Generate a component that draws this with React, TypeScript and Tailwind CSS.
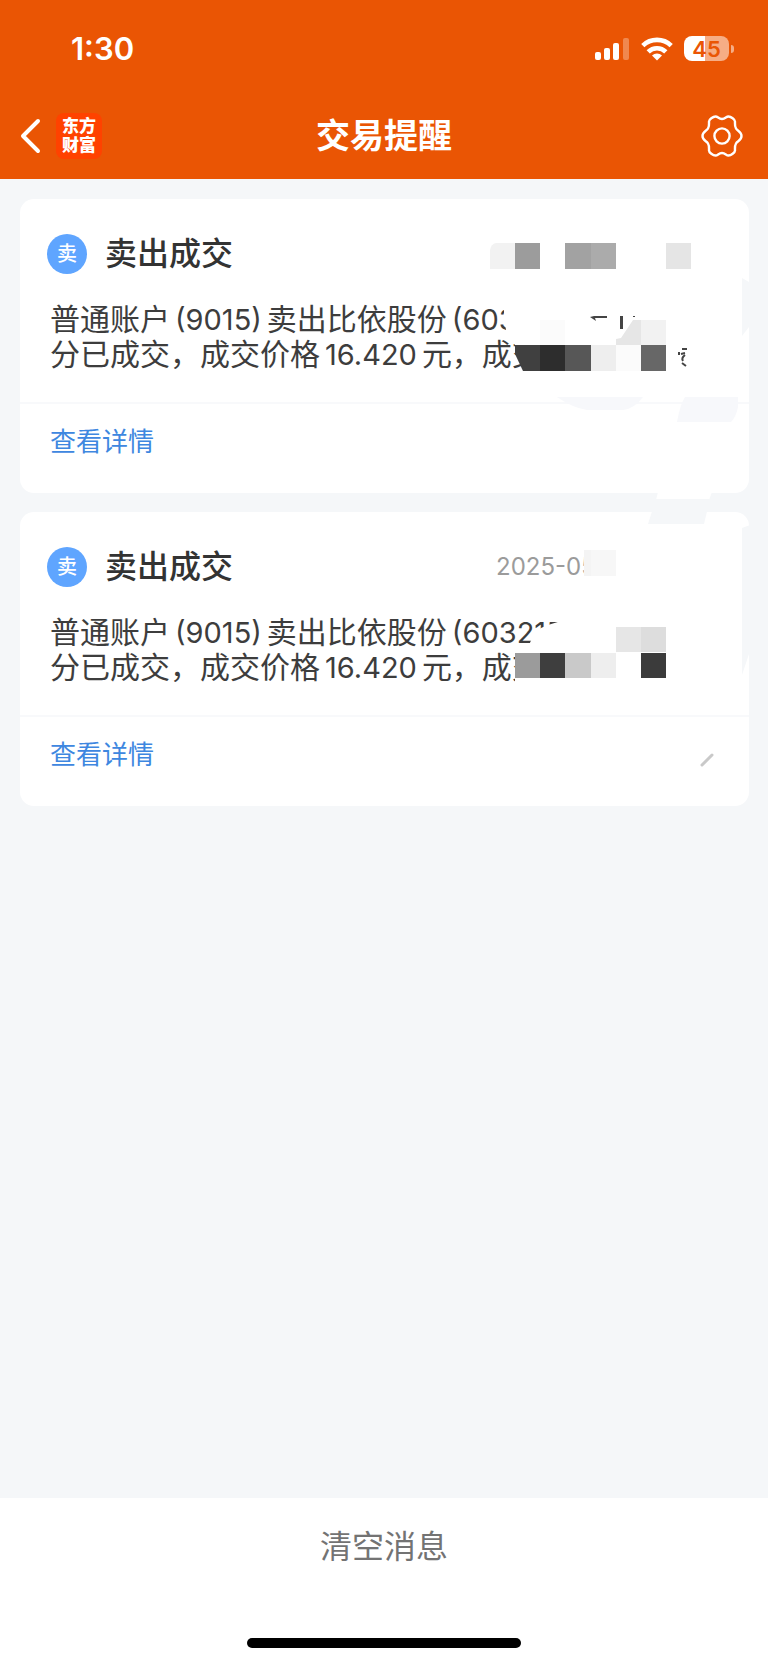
import React from "react";

interface TradeMessage {
  id: number;
  title: string;
  date: string;
  code: string;
}

const messages: TradeMessage[] = [
  { id: 1, title: "卖出成交", date: "", code: "(603" },
  { id: 2, title: "卖出成交", date: "2025-05", code: "(603215" },
];

const StatusBar = () => (
  <div className="flex h-[97px] items-center justify-between pl-[71px] pr-[34px]">
    <span className="text-[31px] font-semibold leading-8">1:30</span>
    <div className="flex items-center gap-[11px]">
      <svg width="35" height="24" viewBox="0 0 35 24" fill="#fff" aria-hidden="true">
        <rect x="0" y="15" width="6" height="8" rx="2" />
        <rect x="9" y="11" width="6" height="12" rx="2" />
        <rect x="18" y="6" width="6" height="17" rx="2" />
        <rect x="28" y="1" width="6" height="22" rx="2" opacity="0.3" />
      </svg>
      <svg width="32" height="24" viewBox="0 0 32 24" fill="none" stroke="#fff" strokeWidth="4.6" aria-hidden="true">
        <path d="M1.8 8.6a20.4 20.4 0 0 1 28.4 0" />
        <path d="M7.2 14.8a12.6 12.6 0 0 1 17.6 0" />
        <path d="M16 23.6l-5-5.2a7.4 7.4 0 0 1 10 0z" fill="#fff" stroke="none" />
      </svg>
      <div className="flex items-center gap-0.5">
        <span className="flex h-[25px] w-[45px] items-center justify-center rounded-lg bg-[linear-gradient(90deg,#fff_47%,#f6ad85_47%)] text-[22px] font-semibold leading-6 text-[#ea5504]">
          45
        </span>
        <span className="h-2 w-[3px] rounded-r-full bg-[#f6ad85]" />
      </div>
    </div>
  </div>
);

const Header = () => (
  <header className="h-[179px] bg-[#ea5504] text-white">
    <StatusBar />
    <div className="grid h-[78px] grid-cols-[1fr_auto_1fr] items-center px-5">
      <div className="flex items-center gap-[15px]">
        <button type="button" aria-label="返回">
          <svg width="21" height="36" viewBox="0 0 21 36" fill="none" stroke="#fff" strokeWidth="4" strokeLinecap="round" strokeLinejoin="round">
            <path d="M18 3L3 18l15 15" />
          </svg>
        </button>
        <span className="flex h-[46px] w-[46px] flex-col items-center justify-center rounded-lg bg-[#ff4200] text-[17px] font-black leading-[19px]">
          <span>东方</span>
          <span>财富</span>
        </span>
      </div>
      <h1 className="text-[34px] font-bold leading-10">交易提醒</h1>
      <button type="button" aria-label="设置" className="mr-[5px] justify-self-end">
        <svg width="42" height="42" viewBox="0 0 42 42" fill="none" stroke="#fff" strokeWidth="2.4" strokeLinejoin="round">
          <path d="M14.5 1.5C17 1.5 17.500 4 21 4S25 1.500 27.500 1.500C30 1.500 34 4.500 34 6.500C34 9 33.500 11 35 13.500S40.500 16.500 40.500 21S36.500 26 35 28.500S34 33 34 35.500C34 37.500 30 40.500 27.500 40.500C25 40.500 24.500 38 21 38S17 40.500 14.500 40.500C12 40.500 8 37.500 8 35.500C8 33 8.500 31 7 28.500S1.500 25.500 1.500 21S5.500 16 7 13.500S8 9 8 6.500C8 4.500 12 1.500 14.500 1.500Z" />
          <circle cx="21" cy="21" r="7.6" />
        </svg>
      </button>
    </div>
  </header>
);

// Mosaic hiding the private part of the first message
const FirstMosaic = () => (
  <svg className="pointer-events-none absolute left-0 top-0" width="729" height="294" viewBox="0 0 729 294" aria-hidden="true">
    <path d="M484 90h201v56H495l-8-10-3-16z" fill="#fff" />
    <path d="M476 44h19v26h-25V51q1-6 6-7z" fill="#f2f2f2" />
    <path d="M495 44h25v26h-25z" fill="#9c9c9c" />
    <path d="M545 44h26v26h-26z" fill="#a2a2a2" />
    <path d="M571 44h25v26h-25z" fill="#ababab" />
    <path d="M646 44h25v26h-25z" fill="#e5e5e5" />
    <path d="M520 121h25v25h-25z" fill="#fbfbfb" />
    <path d="M613 121h8v25h-25v-6l5-1z" fill="#e6e6e6" />
    <path d="M621 121h25v25h-25z" fill="#f2f2f2" />
    <path d="M495 146h25v26h-17l-8-17z" fill="#404040" />
    <path d="M520 146h25v26h-25z" fill="#2d2d2d" />
    <path d="M545 146h26v26h-26z" fill="#575757" />
    <path d="M571 146h25v26h-25z" fill="#eee" />
    <path d="M596 146h25v26h-25z" fill="#fbfbfb" />
    <path d="M621 146h25v26h-25z" fill="#676767" />
    <path d="M570 118l4-1h13v2h-12l1 3zM600 117h3v13h-3zM613 117h2v1h-2z" fill="#444" />
    <path d="M662 150h5M659 153v3M661 155l4-1M665 156q-4 3-2 6M662 164l4 3" stroke="#444" strokeWidth="2" fill="none" />
    <path d="M537 198h86q-9 12-20 13h-36q-14-2-30-13z" fill="#f7f8fb" />
    <path d="M665 198h53v10q-2 10-7 15h-54q3-17 8-25z" fill="#f7f8fb" />
    <path d="M722 79l7 4v45l-7 9z" fill="#f5f7f9" />
  </svg>
);

// Mosaic of the second message, it also smears across the gap above the card
const SecondMosaic = () => (
  <svg className="pointer-events-none absolute left-0 top-0 overflow-visible" width="729" height="294" viewBox="0 0 729 294" aria-hidden="true">
    <path d="M638-20h54l-3 8h-53z" fill="#fff" />
    <path d="M636-13h54l-6 25h-56z" fill="#f5f7f9" />
    <path d="M564 20h90v60h-90z" fill="#fff" />
    <path d="M590 100v41h-86l5-8 4-9 8-8 7-3 13-4z" fill="#fff" />
    <path d="M495 166h40v8h-40z" fill="#fff" />
    <path d="M564 38h7v26h-7z" fill="#f4f4f4" />
    <path d="M571 38h25v26h-25z" fill="#f7f7f7" />
    <path d="M596 115h25v25h-25z" fill="#e6e6e6" />
    <path d="M621 115h25v25h-25z" fill="#ddd" />
    <path d="M495 141h25v25h-25z" fill="#9b9b9b" />
    <path d="M520 141h25v25h-25z" fill="#3e3e3e" />
    <path d="M545 141h26v25h-26z" fill="#c9c9c9" />
    <path d="M571 141h25v25h-25z" fill="#eee" />
    <path d="M621 141h25v25h-25z" fill="#3b3b3b" />
    <path d="M722 16l8-3v126l-8 24z" fill="#f5f7f9" />
    <path d="M682 253l10-10" stroke="#c9c9c9" strokeWidth="3" strokeLinecap="round" />
  </svg>
);

const Num = ({ children }: { children: React.ReactNode }) => (
  <span className="ml-[5px] mr-[5px] text-[29px]">{children}</span>
);

const MessageCard = ({ message, children }: { message: TradeMessage; children?: React.ReactNode }) => (
  <article className="relative rounded-[14px] bg-white">
    <div className="flex h-[110px] items-center pl-[27px]">
      <span className="flex h-10 w-10 items-center justify-center rounded-full bg-[#5fa5ff] text-[20px] font-medium leading-6 text-white">
        卖
      </span>
      <h2 className="ml-[18px] w-[391px] text-[32px] font-medium leading-10 text-[#333]">{message.title}</h2>
      <time className="text-[24px] leading-8 text-[#9b9b9b]">{message.date}</time>
    </div>
    <div className="-mt-[7px] h-[100px] whitespace-nowrap pl-[30px] text-[30px] leading-[35px] text-[#3d3d3d]">
      <p>
        普通账户<Num>(9015)</Num>卖出比依股份<Num>{message.code}</Num>
      </p>
      <p>
        分已成交，成交价格<Num>16.420</Num>元，成交
      </p>
    </div>
    <div className="flex h-[91px] items-start border-t-2 border-[#f8f9fb] pl-[30px] pt-[22px]">
      <a href="#detail" className="text-[26px] leading-8 text-[#3e87e0]">
        查看详情
      </a>
    </div>
    {children}
  </article>
);

const App = () => (
  <div className="flex min-h-screen flex-col bg-[#f5f7f9] font-['Inter','Noto_Sans_CJK_SC',sans-serif]">
    <Header />
    <main className="flex flex-1 flex-col gap-[19px] px-5 pt-5 pr-[19px]">
      <MessageCard message={messages[0]}>
        <FirstMosaic />
      </MessageCard>
      <MessageCard message={messages[1]}>
        <SecondMosaic />
      </MessageCard>
    </main>
    <footer className="flex h-[166px] flex-col items-center justify-between bg-white pb-4 pt-[29px]">
      <button type="button" className="text-[32px] leading-10 text-[#737373]">
        清空消息
      </button>
      <span className="h-[10px] w-[274px] rounded-full bg-black" />
    </footer>
  </div>
);

export default App;
